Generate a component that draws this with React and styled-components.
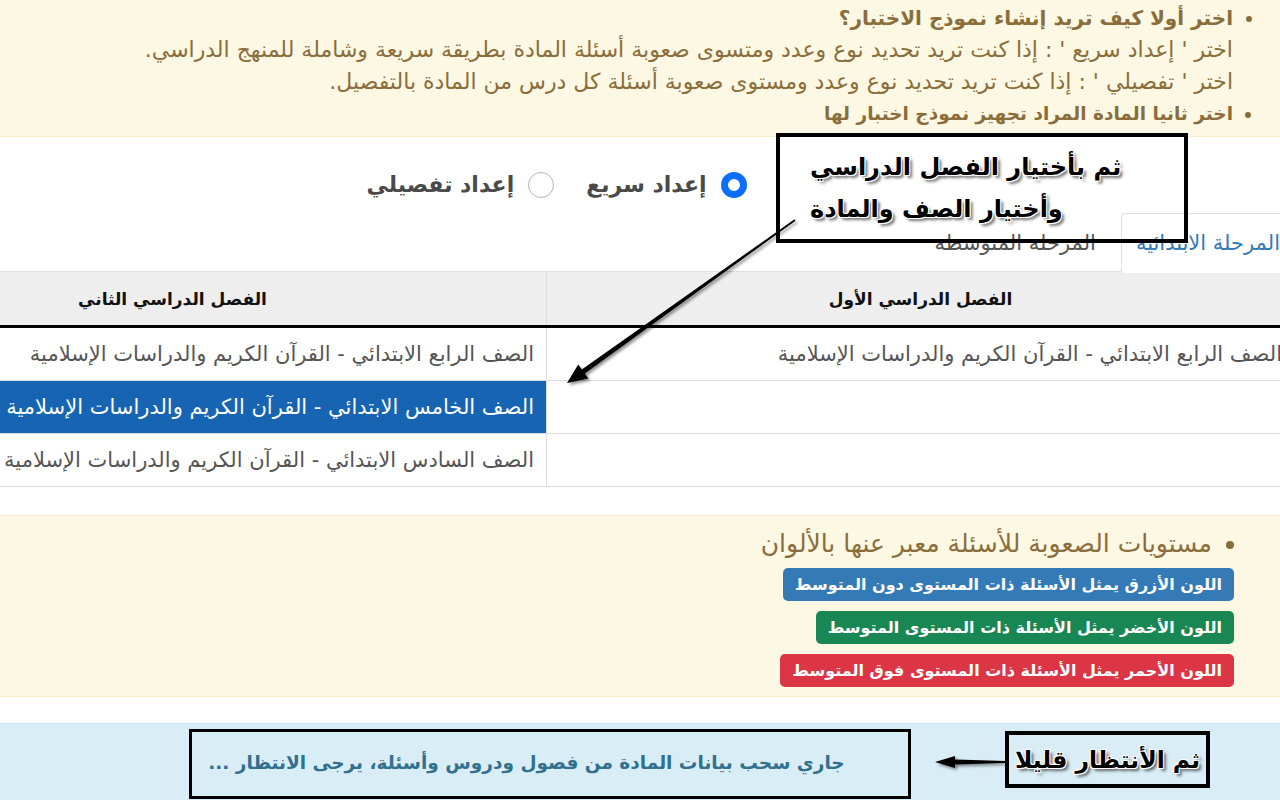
import React from "react";
import styled, { createGlobalStyle } from "styled-components";

const GlobalStyle = createGlobalStyle`
  html, body { margin: 0; padding: 0; background: #fff; }
  body { overflow: hidden; }
`;

const Page = styled.div`
  position: relative;
  width: 1280px;
  height: 800px;
  overflow: hidden;
  direction: rtl;
  font-family: "DejaVu Sans", "Noto Sans", sans-serif;
  background: #fff;
`;

const Canvas = styled.div`
  margin: 0 -15px 0 -202px;
`;

const Alert = styled.div`
  box-sizing: border-box;
  background: ${(p) => (p.$info ? "#d9edf7" : "#fcf8e3")};
  color: ${(p) => (p.$info ? "#31708f" : "#8a6d3b")};
  border-top: 1px solid ${(p) => (p.$info ? "#bce8f1" : p.$noTop ? "transparent" : "#faebcc")};
  border-bottom: 1px solid ${(p) => (p.$info ? "transparent" : "#faebcc")};
  margin-top: ${(p) => p.$mt || 0}px;
  padding: ${(p) => p.$pad};
  height: ${(p) => (p.$h ? `${p.$h}px` : "auto")};
`;

const List = styled.ul`
  margin: 0;
  padding: 0 ${(p) => p.$indent}px 0 0;
  list-style: disc;
`;

const Item = styled.li`
  font-size: ${(p) => p.$size || 19}px;
  line-height: ${(p) => p.$lh || 32}px;
  font-weight: ${(p) => (p.$bold ? 700 : 400)};
`;

const Note = styled.div`
  font-weight: 400;
  font-size: 22px;
`;

const RadioRow = styled.div`
  box-sizing: border-box;
  height: 76px;
  display: flex;
  justify-content: center;
  align-items: center;
  padding: 20px 0 0 20px;
`;

const RadioOption = styled.label`
  display: flex;
  align-items: center;
  gap: 14px;
  margin-left: 32px;
  font-size: 22px;
  line-height: 26px;
  font-weight: 700;
  color: #4a4a4a;
  &:last-child { margin-left: 0; }
`;

const RadioDot = styled.span`
  width: 26px;
  height: 26px;
  box-sizing: border-box;
  border-radius: 50%;
  background: #fff;
  border: ${(p) => (p.$checked ? "7px solid #0d6efd" : "1px solid #b5b5b5")};
`;

const TabBar = styled.div`
  box-sizing: border-box;
  display: flex;
  border-bottom: 1px solid #ddd;
  height: 59px;
`;

const Tab = styled.div`
  height: 58px;
  line-height: 58px;
  padding: 0 14px;
  margin-left: 10px;
  margin-bottom: -1px;
  font-size: 21px;
  box-sizing: content-box;
  white-space: nowrap;
  border: 1px solid ${(p) => (p.$active ? "#ddd" : "transparent")};
  border-bottom-color: ${(p) => (p.$active ? "#fff" : "transparent")};
  border-radius: 4px 4px 0 0;
  background: ${(p) => (p.$active ? "#fff" : "transparent")};
  color: ${(p) => (p.$active ? "#337ab7" : "#555")};
`;

const Table = styled.table`
  width: 100%;
  border-collapse: collapse;
  table-layout: fixed;
`;

const Th = styled.th`
  height: 53px;
  background: #eee;
  border: 1px solid #ddd;
  border-top: 0;
  border-bottom: 3px solid #000;
  font-size: 17px;
  font-weight: 700;
  color: #111;
  text-align: center;
  padding: 0 12px;
`;

const Td = styled.td`
  height: 52px;
  border: 1px solid #ddd;
  padding: 0 12px;
  font-size: 21px;
  color: ${(p) => (p.$selected ? "#fff" : "#555")};
  background: ${(p) => (p.$selected ? "#1664b2" : "#fff")};
  text-align: right;
  white-space: nowrap;
  overflow: hidden;
`;

const Badges = styled.div`
  display: flex;
  flex-direction: column;
  align-items: flex-start;
  gap: 10px;
  padding-right: 61px;
  margin-top: 5px;
`;

const Badge = styled.span`
  height: 33px;
  line-height: 33px;
  padding: 0 12px;
  border-radius: 5px;
  color: #fff;
  font-weight: 700;
  font-size: 16px;
  white-space: nowrap;
  background: ${(p) => p.$bg};
`;

const InfoText = styled.div`
  text-align: center;
  padding-right: 40px;
  font-size: 18.5px;
  font-weight: 700;
  line-height: 24px;
`;

const Callout = styled.div`
  position: absolute;
  left: ${(p) => p.$x}px;
  top: ${(p) => p.$y}px;
  width: ${(p) => p.$w}px;
  height: ${(p) => p.$h}px;
  box-sizing: border-box;
  border: ${(p) => p.$b || 4}px solid #000;
  display: flex;
  flex-direction: column;
  justify-content: center;
  align-items: ${(p) => p.$align || "center"};
  padding: ${(p) => p.$pad || "0"};
`;

const CalloutText = styled.div`
  font-family: "DejaVu Sans", sans-serif;
  font-size: ${(p) => p.$size || 24}px;
  line-height: 42px;
  font-weight: 700;
  color: #000;
  white-space: nowrap;
  text-shadow: 1px 1px 0 #fff, -1px -1px 0 #fff, 1px -1px 0 #fff, -1px 1px 0 #fff,
    3px 3px 3px rgba(0, 0, 0, 0.55);
`;

const ArrowSvg = styled.svg`
  position: absolute;
  left: ${(p) => p.$x}px;
  top: ${(p) => p.$y}px;
  overflow: visible;
  filter: drop-shadow(2px 2px 1.5px rgba(0, 0, 0, 0.45));
`;

const rows = [
  ["الصف الرابع الابتدائي - القرآن الكريم والدراسات الإسلامية", "الصف الرابع الابتدائي - القرآن الكريم والدراسات الإسلامية", false],
  ["", "الصف الخامس الابتدائي - القرآن الكريم والدراسات الإسلامية", true],
  ["", "الصف السادس الابتدائي - القرآن الكريم والدراسات الإسلامية", false],
];

export default function App() {
  return (
    <>
      <GlobalStyle />
      <Page>
        <Canvas>
          <Alert $noTop $h={137} $pad="1px 0 0">
            <List $indent={62}>
              <Item $bold $size={20}>
                اختر أولا كيف تريد إنشاء نموذج الاختبار؟
                <Note>اختر ' إعداد سريع ' : إذا كنت تريد تحديد نوع وعدد ومتسوى صعوبة أسئلة المادة بطريقة سريعة وشاملة للمنهج الدراسي.</Note>
                <Note>اختر ' تفصيلي ' : إذا كنت تريد تحديد نوع وعدد ومستوى صعوبة أسئلة كل درس من المادة بالتفصيل.</Note>
              </Item>
              <Item $bold $size={18.5}>اختر ثانيا المادة المراد تجهيز نموذج اختبار لها</Item>
            </List>
          </Alert>

          <RadioRow>
            <RadioOption>
              <RadioDot $checked />
              إعداد سريع
            </RadioOption>
            <RadioOption>
              <RadioDot />
              إعداد تفصيلي
            </RadioOption>
          </RadioRow>

          <TabBar>
            <Tab $active>المرحلة الابتدائية</Tab>
            <Tab>المرحلة المتوسطة</Tab>
          </TabBar>

          <Table>
            <thead>
              <tr>
                <Th>الفصل الدراسي الأول</Th>
                <Th>الفصل الدراسي الثاني</Th>
              </tr>
            </thead>
            <tbody>
              {rows.map(([a, b, sel], i) => (
                <tr key={i}>
                  <Td>{a}</Td>
                  <Td $selected={sel}>{b}</Td>
                </tr>
              ))}
            </tbody>
          </Table>

          <Alert $mt={28} $pad="9px 0 9px">
            <List $indent={83}>
              <Item $size={25} $lh={38}>مستويات الصعوبة للأسئلة معبر عنها بالألوان</Item>
            </List>
            <Badges>
              <Badge $bg="#337ab7">اللون الأزرق يمثل الأسئلة ذات المستوى دون المتوسط</Badge>
              <Badge $bg="#198754">اللون الأخضر يمثل الأسئلة ذات المستوى المتوسط</Badge>
              <Badge $bg="#dc3545">اللون الأحمر يمثل الأسئلة ذات المستوى فوق المتوسط</Badge>
            </Badges>
          </Alert>

          <Alert $info $mt={26} $pad="27px 0 40px">
            <InfoText>جاري سحب بيانات المادة من فصول ودروس وأسئلة، يرجى الانتظار ...</InfoText>
          </Alert>
        </Canvas>

        <Callout $x={776} $y={133} $w={412} $h={110} $align="flex-end" $pad="0 60px 0 30px">
          <CalloutText>ثم بأختيار الفصل الدراسي</CalloutText>
          <CalloutText>وأختيار الصف والمادة</CalloutText>
        </Callout>

        <ArrowSvg $x={560} $y={215} width="245" height="175" viewBox="0 0 245 175">
          <polygon points="235.5,5.7 24.8,158.4 28.4,163.5 7,168 18.2,149.4 21.8,154.4 234.5,4.3" fill="#000" />
        </ArrowSvg>

        <Callout $x={189} $y={729} $w={722} $h={70} $b={3} />

        <ArrowSvg $x={930} $y={752} width="80" height="20" viewBox="0 0 80 20">
          <polygon points="75,9 25,7.5 25,4 5,10 25,16 25,12.5 75,11" fill="#000" />
        </ArrowSvg>

        <Callout $x={1005} $y={731} $w={205} $h={57}>
          <CalloutText $size={23.5}>ثم الأنتظار قليلا</CalloutText>
        </Callout>
      </Page>
    </>
  );
}
